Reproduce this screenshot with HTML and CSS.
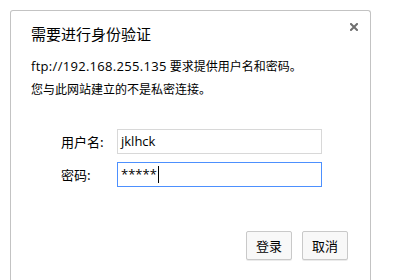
FILE: index.html
```html
<!DOCTYPE html>
<html lang="zh-CN">
<head>
    <meta charset="UTF-8">
    <title>需要进行身份验证</title>
    <link rel="stylesheet" href="styles.css">
</head>
<body>
    <div class="dialog">
        <button class="close" type="button" aria-label="关闭">
            <svg width="8" height="8" viewBox="0 0 8 8">
                <path d="M1 1L7 7M7 1L1 7" stroke="#6f6f6f" stroke-width="2" stroke-linecap="square"/>
            </svg>
        </button>

        <h2 class="title">需要进行身份验证</h2>
        <p class="info"><span class="url">ftp://192.168.255.135</span> 要求提供用户名和密码。</p>
        <p class="info">您与此网站建立的不是私密连接。</p>

        <div class="form">
            <div class="row">
                <span class="label">用户名:</span>
                <div class="field">jklhck</div>
            </div>
            <div class="row">
                <span class="label">密码:</span>
                <div class="field active">*****<span class="caret"></span></div>
            </div>
        </div>

        <div class="buttons">
            <button class="btn" type="button">登录</button>
            <button class="btn" type="button">取消</button>
        </div>
    </div>
</body>
</html>
```

FILE: styles.css
```css
body {
    margin: 0;
    background: #fff;
    font-family: "Open Sans", "Noto Sans CJK SC", sans-serif;
    color: #000;
    overflow: hidden;
}
.dialog {
    position: relative;
    box-sizing: border-box;
    width: 361px;
    height: 270px;
    margin: 10px 0 0 10px;
    padding: 13px 21px 0 20px;
    border: 1px solid #c3c3c3;
    border-bottom: none;
    border-radius: 3px 3px 0 0;
    background: #fff;
}
.close {
    position: absolute;
    top: 10px;
    right: 10px;
    width: 12px;
    height: 12px;
    padding: 0;
    border: none;
    background: none;
    display: flex;
    align-items: center;
    justify-content: center;
}
.title {
    margin: 0;
    font-size: 15px;
    font-weight: normal;
    line-height: 20px;
    font-family: "Noto Sans CJK SC", sans-serif;
}
.info {
    margin: 0;
    font-size: 12px;
    line-height: 23px;
}
.info .url {
    font-size: 13px;
    letter-spacing: 0.3px;
}
.title + .info {
    margin-top: 11px;
}
.form {
    margin-top: 28px;
    padding-left: 30px;
    display: flex;
    flex-direction: column;
    gap: 8px;
}
.row {
    display: flex;
    align-items: center;
    height: 25px;
}
.label {
    width: 56px;
    font-size: 13px;
    font-family: "Noto Sans CJK SC", sans-serif;
}
.field {
    box-sizing: border-box;
    width: 205px;
    height: 25px;
    padding: 0 3px;
    border: 1px solid #d8d8d8;
    font-size: 13px;
    line-height: 23px;
    display: flex;
    align-items: center;
}
.field.active {
    border-color: #4d90fe;
}
.caret {
    display: inline-block;
    width: 1px;
    height: 17px;
    margin-left: 1px;
    background: #000;
}
.buttons {
    margin-top: 44px;
    display: flex;
    justify-content: flex-end;
    gap: 10px;
    padding-right: 1px;
}
.btn {
    box-sizing: border-box;
    width: 46px;
    height: 29px;
    padding: 0;
    border: 1px solid #c9c9c9;
    border-radius: 2px;
    background: #f8f8f8;
    box-shadow: 0 1px 0 rgba(0, 0, 0, 0.08);
    font-size: 13px;
    font-family: "Noto Sans CJK SC", sans-serif;
    color: #000;
}
```
